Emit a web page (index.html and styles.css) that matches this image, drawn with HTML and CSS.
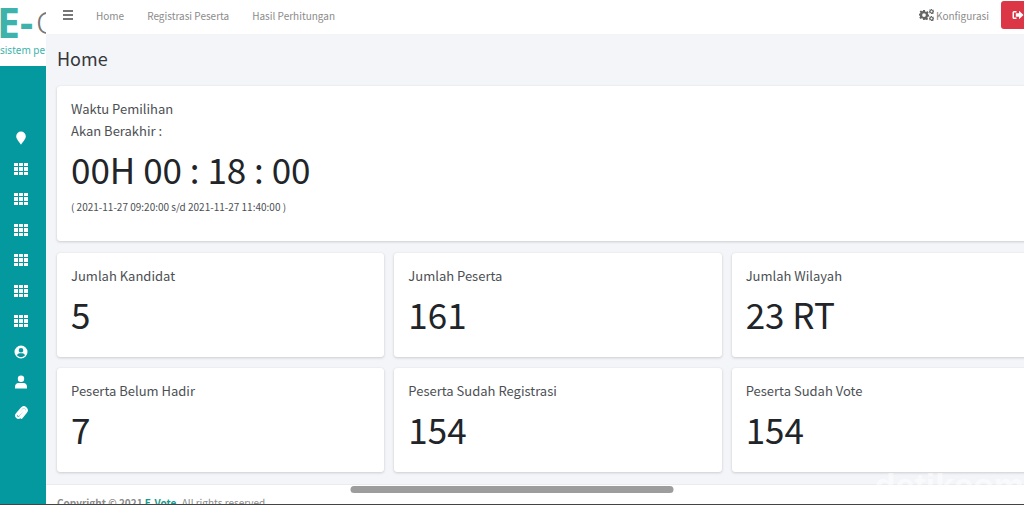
FILE: index.html
```html
<!DOCTYPE html>
<html lang="id">
<head>
	<meta charset="utf-8">
	<title>Home</title>
	<link rel="stylesheet" href="styles.css">
</head>
<body>
	<svg class="sprite" aria-hidden="true">
		<symbol id="th" viewBox="0 0 14 12">
			<path d="M0 0h4v3H0zM5 0h4v3H5zM10 0h4v3h-4zM0 4h4v4H0zM5 4h4v4H5zM10 4h4v4h-4zM0 9h4v3H0zM5 9h4v3H5zM10 9h4v3h-4z"/>
		</symbol>
		<symbol id="gear" viewBox="0 0 16 16">
			<path fill-rule="evenodd" d="M6.5 0h3l.4 2.3 1.5.7 2-1.3 2 2.1-1.3 1.9.6 1.4 1.3.3v3l-2 .4-.6 1.5 1.2 2-2.1 2.1-2-1.3-1.3.5L8.800 16h-2.300l-.5-2.300-1.500-.6-2 1.300L.5 12.300l1.200-2-.5-1.300L0 8.500v-2.500l1.700-.4.6-1.500L1 2.500 3 .8l2 1.300 1.200-.5zM8 5a3 3 0 1 0 0 6a3 3 0 0 0 0-6z"/>
		</symbol>
	</svg>
	<aside class="sidebar">
		<a class="brand" href="#">
			<span class="brand-name">E-<span class="brand-thin">O</span></span>
			<span class="brand-text">sistem pe</span>
		</a>
		<nav class="side-menu">
			<a href="#" aria-label="Lokasi"><svg viewBox="0 0 14 14"><path d="M7 0.500a4.800 4.800 0 0 1 4.800 4.800C11.800 8.500 8.500 11 7 13.800C5.500 11 2.200 8.500 2.200 5.300A4.800 4.800 0 0 1 7 .5z"/></svg></a>
			<a href="#" aria-label="Data"><svg><use href="#th"/></svg></a>
			<a href="#" aria-label="Data"><svg><use href="#th"/></svg></a>
			<a href="#" aria-label="Data"><svg><use href="#th"/></svg></a>
			<a href="#" aria-label="Data"><svg><use href="#th"/></svg></a>
			<a href="#" aria-label="Data"><svg><use href="#th"/></svg></a>
			<a href="#" aria-label="Data"><svg><use href="#th"/></svg></a>
			<a href="#" aria-label="Akun"><svg viewBox="0 0 14 14"><path fill-rule="evenodd" d="M7 .5a6.500 6.500 0 1 0 0 13a6.500 6.500 0 0 0 0-13zM7 3a2.300 2.300 0 1 1 0 4.600a2.300 2.300 0 0 1 0-4.600zM3 10.300c.5-1.300 1.500-2 2.500-2h3c1 0 2 .7 2.500 2c-1 1.200-2.400 1.800-4 1.800s-3-.6-4-1.800z"/></svg></a>
			<a href="#" aria-label="Pengguna"><svg viewBox="0 0 14 14"><path d="M7 .5a3.200 3.200 0 1 1 0 6.400a3.200 3.200 0 0 1 0-6.400zM1 13.500v-2c0-2 1.500-3.600 3.500-3.600h5c2 0 3.500 1.600 3.500 3.600v2z"/></svg></a>
			<a href="#" aria-label="Lampiran"><svg viewBox="0 0 14 14"><path class="clip" d="M4.500 9l4.500-5a1 1 0 0 1 1.500 1.500L6 11a2.200 2.200 0 0 1-3.300-3L7.500 2.300a3 3 0 0 1 4.500 4L7.500 12"/></svg></a>
		</nav>
	</aside>
	<div class="wrapper">
		<header class="navbar">
			<button class="toggle" type="button" aria-label="Menu"><svg viewBox="0 0 10 10"><path d="M0 0h10v2H0zM0 4h10v2H0zM0 8h10v2H0z"/></svg></button>
			<nav class="nav-links">
				<a href="#">Home</a>
				<a href="#">Registrasi Peserta</a>
				<a href="#">Hasil Perhitungan</a>
			</nav>
			<a class="config" href="#">
				<svg viewBox="0 0 15 12"><use href="#gear" x="0" y="1" width="10" height="10"/><use href="#gear" x="10" y="0" width="5" height="5"/><use href="#gear" x="10" y="7" width="5" height="5"/></svg>
				Konfigurasi
			</a>
			<button class="logout" type="button" aria-label="Keluar"><svg viewBox="0 0 12 10"><path d="M4.500 1v1.500h-2.500v5h2.500V9H2a1.500 1.500 0 0 1-1.500-1.500v-5A1.500 1.500 0 0 1 2 1zM7 .8L11.500 5L7 9.200V6.800H3.800V3.300H7z"/></svg></button>
		</header>
		<main class="content">
			<h1>Home</h1>
			<section class="card timer">
				<h2>Waktu Pemilihan</h2>
				<h2>Akan Berakhir :</h2>
				<p class="number">00H 00 : 18 : 00</p>
				<p class="period">( 2021-11-27 09:20:00 s/d 2021-11-27 11:40:00 )</p>
			</section>
			<div class="stats">
				<section class="card"><h2>Jumlah Kandidat</h2><p class="number">5</p></section>
				<section class="card"><h2>Jumlah Peserta</h2><p class="number">161</p></section>
				<section class="card"><h2>Jumlah Wilayah</h2><p class="number">23 RT</p></section>
				<section class="card"><h2>Peserta Belum Hadir</h2><p class="number">7</p></section>
				<section class="card"><h2>Peserta Sudah Registrasi</h2><p class="number">154</p></section>
				<section class="card"><h2>Peserta Sudah Vote</h2><p class="number">154</p></section>
			</div>
		</main>
		<footer class="footer"><strong>Copyright © 2021 <a href="#">E-Vote</a>.</strong> All rights reserved.</footer>
	</div>
	<div class="watermark">detikcom</div>
	<div class="scroll-thumb"></div>
</body>
</html>
```
FILE: styles.css
```css
* {
	box-sizing: border-box;
}
body {
	margin: 0;
	height: 100vh;
	overflow: hidden;
	display: flex;
	background-color: #f4f5f9;
	border-bottom: 1px solid #444;
	font-family: "Noto Sans CJK SC", "Noto Sans", sans-serif;
	color: #212529;
}
a {
	color: inherit;
	text-decoration: none;
}
h1, h2, p {
	margin: 0;
	font-weight: 400;
}
button {
	border: 0 none;
	padding: 0;
	cursor: pointer;
}
svg {
	display: block;
	fill: currentColor;
}
.sprite {
	position: absolute;
	width: 0;
	height: 0;
}
.sidebar {
	flex: none;
	width: 46px;
	overflow: hidden;
	background-color: #03999e;
	color: white;
}
.brand {
	display: block;
	height: 66px;
	padding-top: 2px;
	background-color: white;
	color: #3db3ab;
	font-family: "Noto Sans", sans-serif;
	white-space: nowrap;
}
.brand-name {
	display: flex;
	align-items: center;
	gap: 3px;
	height: 40px;
	margin-left: -3px;
	font-size: 41px;
	line-height: 40px;
	font-weight: 700;
}
.brand-thin {
	font-size: 32px;
	font-weight: 300;
	color: #777;
}
.brand-text {
	display: block;
	font-size: 10px;
	line-height: 16px;
}
.side-menu {
	display: flex;
	flex-direction: column;
	justify-content: space-between;
	height: 354px;
	padding: 65px 0 0 14px;
}
.side-menu svg {
	width: 14px;
	height: 14px;
}
.clip {
	fill: none;
	stroke: currentColor;
	stroke-width: 2;
	stroke-linecap: round;
}
.wrapper {
	flex: none;
	width: 100%;
	overflow: hidden;
	display: flex;
	flex-direction: column;
}
.navbar {
	flex: none;
	display: flex;
	align-items: center;
	height: 34px;
	padding: 0 35px 4px 17px;
	background-color: white;
	color: #8b8b8b;
	font-size: 10px;
}
.toggle {
	background: none;
	color: #777;
}
.toggle svg {
	width: 10px;
	height: 10px;
}
.nav-links {
	display: flex;
	gap: 23px;
	margin-left: 23px;
}
.config {
	display: flex;
	align-items: center;
	gap: 2px;
	margin-left: auto;
}
.config svg {
	width: 15px;
	height: 12px;
	color: #666;
}
.logout {
	width: 34px;
	height: 28px;
	margin-left: 12px;
	padding-left: 11px;
	border-radius: 3px;
	background-color: #dc3545;
	color: white;
}
.logout svg {
	width: 12px;
	height: 10px;
}
.content {
	flex: none;
	padding: 10px 11px 12px;
}
h1 {
	margin-bottom: 14px;
	font-size: 18px;
	line-height: 28px;
	color: #34383c;
}
.card {
	height: 104px;
	padding: 12px 14px;
	border-radius: 3px;
	background-color: white;
	box-shadow: 0 0 1px rgba(0,0,0,0.1), 0 1px 3px rgba(0,0,0,0.16);
}
.card h2 {
	font-size: 13px;
	line-height: 22px;
	color: #4c5054;
}
.number {
	font-size: 35px;
	line-height: 54px;
}
.timer {
	height: 155px;
	margin-bottom: 12px;
}
.period {
	margin-top: 2px;
	font-size: 10px;
	line-height: 18px;
	color: #4c5054;
}
.stats {
	display: grid;
	grid-template-columns: repeat(3, 1fr);
	gap: 11px 10px;
}
.footer {
	flex: none;
	padding: 9px 11px;
	border-top: 1px solid #e9ebee;
	background-color: white;
	color: #8b8b8b;
	font-size: 10px;
	line-height: 18px;
	white-space: nowrap;
}
.footer a {
	color: #1a9a8c;
}
.watermark {
	position: absolute;
	right: 0;
	bottom: 0;
	color: rgba(255,255,255,0.5);
	font: 700 34px/40px "Liberation Sans", sans-serif;
}
.scroll-thumb {
	position: fixed;
	left: 50%;
	bottom: 12px;
	width: 323px;
	height: 7px;
	transform: translateX(-50%);
	border-radius: 4px;
	background-color: #9d9d9d;
}
```
